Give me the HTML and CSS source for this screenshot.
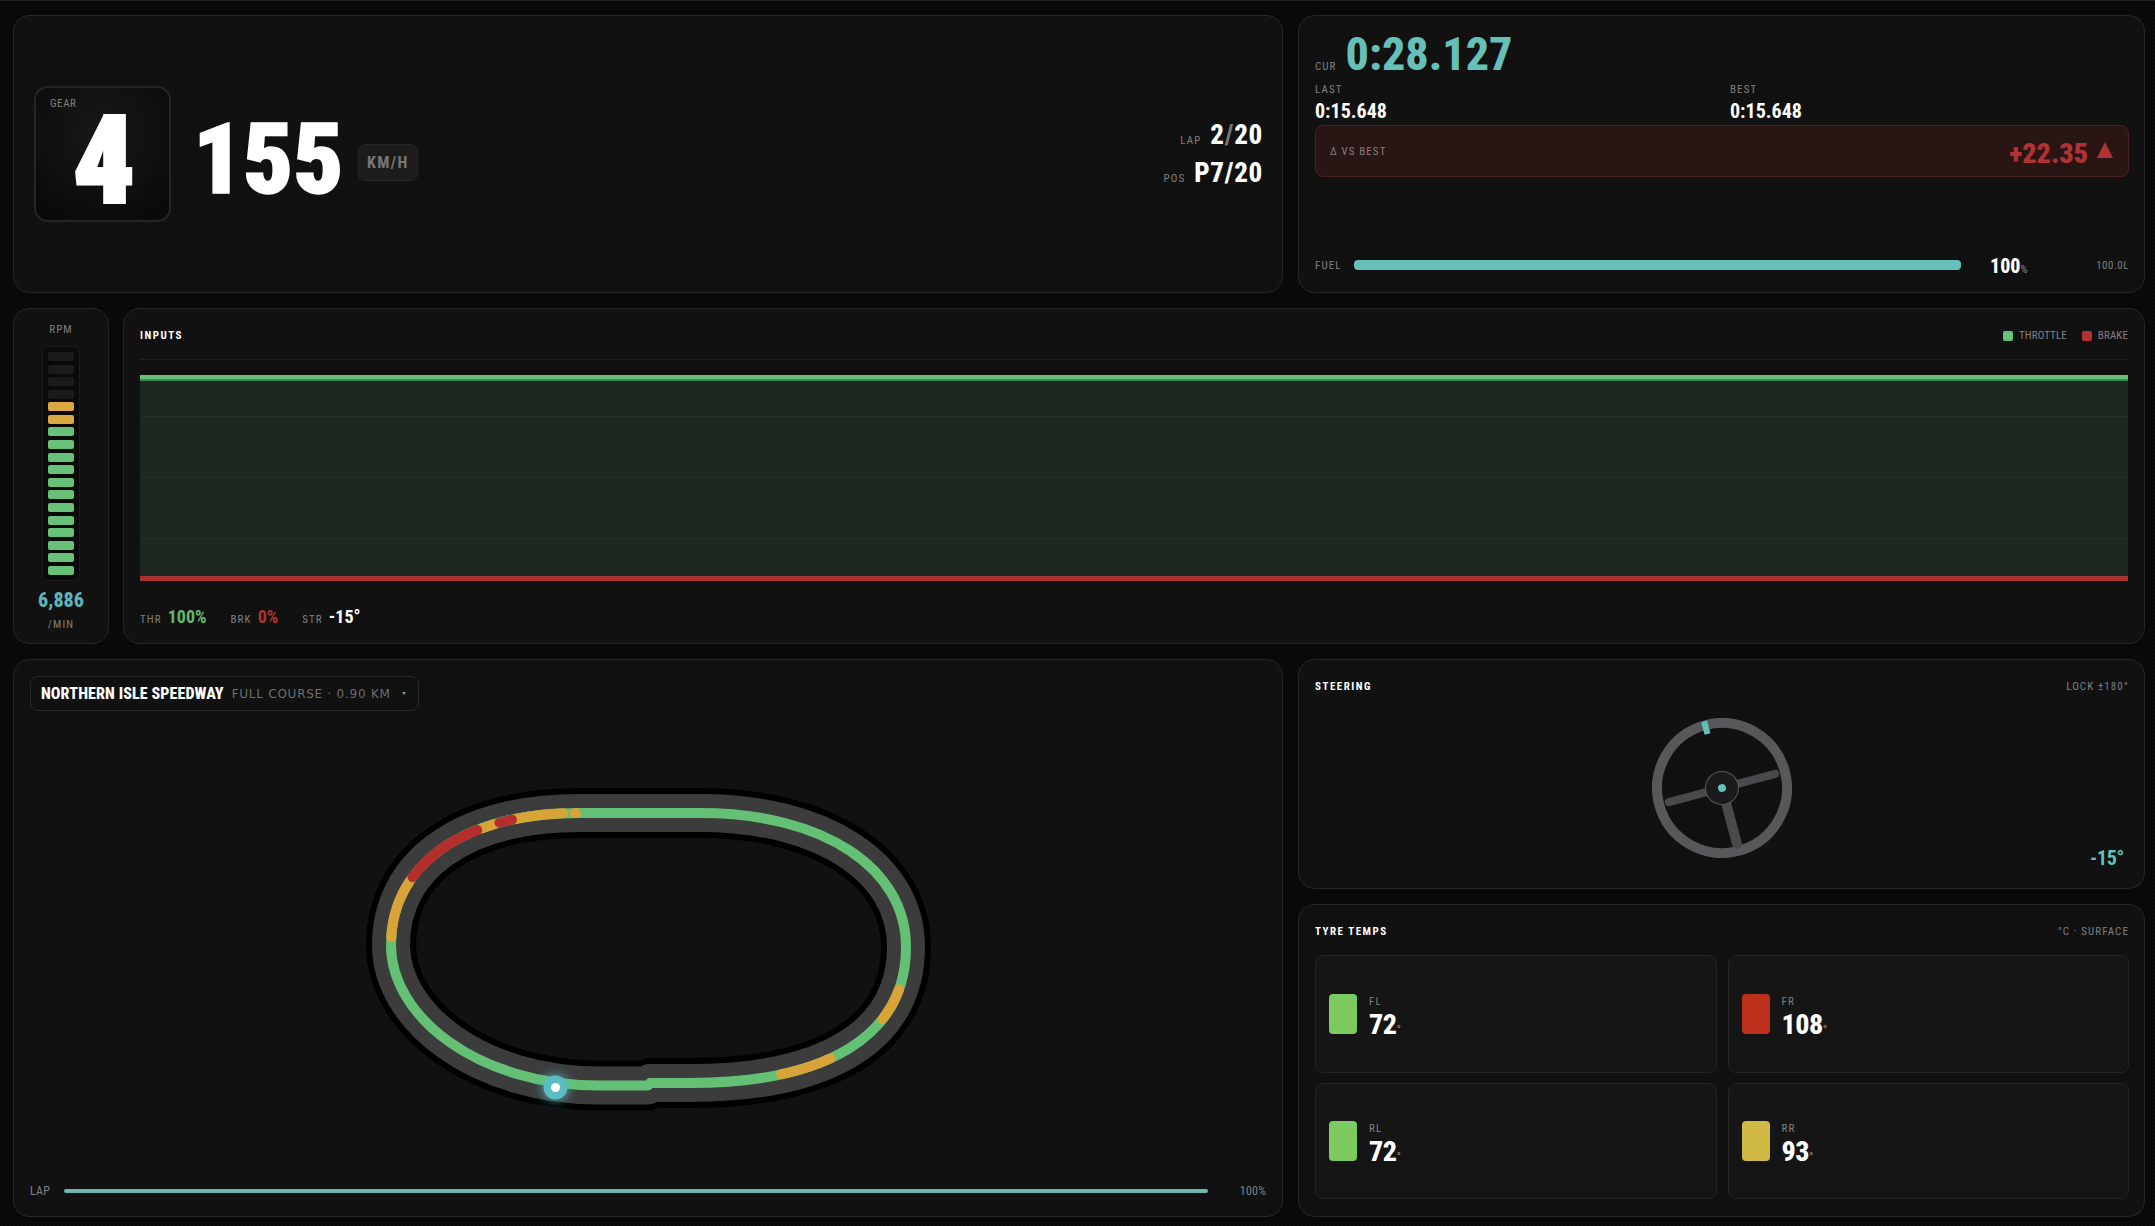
FILE: index.html
```html
<!DOCTYPE html>
<html lang="en">
<head>
  <meta charset="UTF-8">
  <title>Race Telemetry</title>
  <link rel="stylesheet" href="styles.css">
</head>
<body>
  <main class="dash">

    <!-- gear and speed -->
    <section class="panel speed-panel">
      <div class="gear-box">
        <span class="label">GEAR</span>
        <span class="gear-num">4</span>
      </div>
      <div class="speed-num">155</div>
      <div class="speed-unit">KM/H</div>
      <div class="race-info">
        <div class="race-row"><span class="label">LAP</span><span class="race-val">2<i>/</i>20</span></div>
        <div class="race-row"><span class="label">POS</span><span class="race-val">P7/20</span></div>
      </div>
    </section>

    <!-- lap times -->
    <section class="panel time-panel">
      <div class="cur-row">
        <span class="label">CUR</span>
        <span class="cur-time">0:28.127</span>
      </div>
      <div class="split-grid">
        <div><div class="label">LAST</div><div class="split-time">0:15.648</div></div>
        <div><div class="label">BEST</div><div class="split-time">0:15.648</div></div>
      </div>
      <div class="delta-box">
        <span class="label">Δ VS BEST</span>
        <span class="delta-val">+22.35</span>
        <span class="delta-arrow"></span>
      </div>
      <div class="fuel-row">
        <span class="label fuel-label">FUEL</span>
        <div class="fuel-bar"></div>
        <span class="fuel-pct">100<small>%</small></span>
        <span class="label fuel-litres">100.0L</span>
      </div>
    </section>

    <!-- rpm and inputs -->
    <div class="mid-row">
      <section class="panel rpm-panel">
        <div class="label">RPM</div>
        <div class="rpm-meter">
          <div class="seg"></div><div class="seg"></div><div class="seg"></div><div class="seg"></div>
          <div class="seg amber"></div><div class="seg amber"></div>
          <div class="seg green"></div><div class="seg green"></div><div class="seg green"></div><div class="seg green"></div>
          <div class="seg green"></div><div class="seg green"></div><div class="seg green"></div><div class="seg green"></div>
          <div class="seg green"></div><div class="seg green"></div><div class="seg green"></div><div class="seg green"></div>
        </div>
        <div class="rpm-val">6,886</div>
        <div class="label">/MIN</div>
      </section>

      <section class="panel inputs-panel">
        <div class="inputs-head">
          <h2 class="panel-title">INPUTS</h2>
          <div class="legend">
            <i class="key key-green"></i><span class="label">THROTTLE</span>
            <i class="key key-red"></i><span class="label">BRAKE</span>
          </div>
        </div>
        <div class="chart">
          <div class="chart-row"></div>
          <div class="chart-row"></div>
          <div class="chart-row"></div>
          <div class="chart-row"></div>
        </div>
        <div class="input-stats">
          <span class="label">THR</span><span class="stat stat-thr">100%</span>
          <span class="label">BRK</span><span class="stat stat-brk">0%</span>
          <span class="label">STR</span><span class="stat">-15°</span>
        </div>
      </section>
    </div>

    <!-- track map -->
    <section class="panel track-panel">
      <div class="track-select">
        <span class="track-name">NORTHERN ISLE SPEEDWAY</span>
        <span class="track-sub">FULL COURSE · 0.90 KM</span>
        <span class="track-caret"></span>
      </div>
      <svg class="track-map" viewBox="30 711 1237 465" fill="none" stroke-linecap="round" stroke-linejoin="round">
        <defs>
          <path id="circuit" d="M650,1083 L690,1083 C825,1083 906,1037 906,947 C906,869 825,813 700,813 L580,813 C460,813 391,867 391,945 C391,1017 478,1085.5 600,1085.5 L648,1085.5"/>
          <path id="corner-lr" pathLength="100" d="M906,947 C906,1037 825,1083 690,1083"/>
          <path id="corner-tl" pathLength="100" d="M580,813 C460,813 391,867 391,945"/>
        </defs>
        <use href="#circuit" stroke="#000" stroke-width="50"/>
        <use href="#circuit" stroke="#3c3c3c" stroke-width="38"/>
        <g stroke-width="10">
          <use href="#circuit" stroke="#63c074"/>
          <use href="#corner-lr" class="amber-seg" stroke-dasharray="12 1000" stroke-dashoffset="-15"/>
          <use href="#corner-lr" class="amber-seg" stroke-dasharray="18 1000" stroke-dashoffset="-50"/>
          <use href="#corner-tl" class="amber-seg" stroke-dasharray="0.5 1000" stroke-dashoffset="-1.5"/>
          <use href="#corner-tl" class="amber-seg" stroke-dasharray="19 1000" stroke-dashoffset="-6.5"/>
          <use href="#corner-tl" class="amber-seg" stroke-dasharray="5 1000" stroke-dashoffset="-33.5"/>
          <use href="#corner-tl" class="amber-seg" stroke-dasharray="23 1000" stroke-dashoffset="-74"/>
          <use href="#corner-tl" class="red-seg" stroke-dasharray="5 1000" stroke-dashoffset="-26.5"/>
          <use href="#corner-tl" class="red-seg" stroke-dasharray="31.5 1000" stroke-dashoffset="-40.5"/>
        </g>
        <circle class="car-dot" cx="555.5" cy="1087.5" r="12" fill="#5bbcc2"/>
        <circle cx="555.5" cy="1087.5" r="4.5" fill="#fff"/>
      </svg>
      <div class="lap-row">
        <span class="label">LAP</span>
        <div class="lap-bar"></div>
        <span class="label">100%</span>
      </div>
    </section>

    <!-- steering and tyres -->
    <div class="side-col">
      <section class="panel steer-panel">
        <div class="panel-head">
          <h2 class="panel-title">STEERING</h2>
          <span class="label">LOCK ±180°</span>
        </div>
        <svg class="wheel" viewBox="0 0 140 140" fill="none" stroke-linecap="round">
          <g transform="rotate(-15 70 70)">
            <circle cx="70" cy="70" r="65" stroke="#58585b" stroke-width="10"/>
            <line x1="15" y1="70" x2="125" y2="70" stroke="#4a4a4d" stroke-width="8"/>
            <line x1="70" y1="70" x2="70" y2="128" stroke="#4a4a4d" stroke-width="10"/>
            <circle cx="70" cy="70" r="16.5" fill="#1a1a1c" stroke="#58585b" stroke-width="1"/>
            <circle cx="70" cy="70" r="4" fill="#62c0bb"/>
            <line x1="70" y1="1" x2="70" y2="14" stroke="#62c0bb" stroke-width="6" stroke-linecap="butt"/>
          </g>
        </svg>
        <div class="steer-val">-15°</div>
      </section>

      <section class="panel tyre-panel">
        <div class="panel-head">
          <h2 class="panel-title">TYRE TEMPS</h2>
          <span class="label">°C · SURFACE</span>
        </div>
        <div class="tyre-grid">
          <div class="tyre">
            <div class="swatch cool"></div>
            <div class="tyre-text"><div class="label">FL</div><div class="tyre-val">72<small>°</small></div></div>
          </div>
          <div class="tyre">
            <div class="swatch hot"></div>
            <div class="tyre-text"><div class="label">FR</div><div class="tyre-val">108<small>°</small></div></div>
          </div>
          <div class="tyre">
            <div class="swatch cool"></div>
            <div class="tyre-text"><div class="label">RL</div><div class="tyre-val">72<small>°</small></div></div>
          </div>
          <div class="tyre">
            <div class="swatch warm"></div>
            <div class="tyre-text"><div class="label">RR</div><div class="tyre-val">93<small>°</small></div></div>
          </div>
        </div>
      </section>
    </div>

  </main>
</body>
</html>
```

FILE: styles.css
```css
* {
  margin: 0;
  padding: 0;
  box-sizing: border-box;
}

html, body {
  height: 100%;
  overflow: hidden;
}

body {
  background-color: #080808;
  background-image: radial-gradient(#0c0c0c 1px, transparent 1px);
  background-size: 4px 4px;
  color: #fff;
  font-family: Roboto, sans-serif;
  font-stretch: 75%;
}

.dash {
  display: grid;
  grid-template-columns: 1270px 847px;
  grid-template-rows: 278px 336px 558px;
  gap: 15px;
  padding: 14px 10px 0 13px;
  border-top: 1px solid #1c1c1c;
}

.panel {
  background: #111;
  border: 1px solid #262626;
  border-radius: 16px;
}

.label {
  font-size: 11px;
  line-height: 1;
  letter-spacing: 1.1px;
  color: #808080;
}

.panel-title {
  font-size: 11px;
  line-height: 1;
  font-weight: 700;
  letter-spacing: 1.5px;
  color: #fff;
}

.panel-head {
  display: flex;
  justify-content: space-between;
  align-items: flex-start;
}

/* gear + speed */
.speed-panel {
  display: flex;
  align-items: center;
  padding: 0 19px 0 20px;
}

.gear-box {
  width: 137px;
  height: 136px;
  flex: none;
  padding: 10px 14px;
  border: 2px solid #262626;
  border-radius: 14px;
  background: radial-gradient(circle at 50% 35%, #191919, #0a0a0a 85%);
}

.gear-box .label {
  display: block;
  letter-spacing: .6px;
}

.gear-num {
  display: block;
  margin-top: 9px;
  padding-left: 3px;
  text-align: center;
  font-size: 122px;
  line-height: .72;
  font-weight: 900;
  -webkit-text-stroke: 3px #fff;
}

.speed-num {
  margin-left: 22px;
  margin-top: 12px;
  font-size: 98px;
  line-height: 1;
  font-weight: 900;
  letter-spacing: .2px;
  -webkit-text-stroke: 1.5px #fff;
}

.speed-unit {
  display: flex;
  align-items: center;
  justify-content: center;
  width: 60px;
  height: 37px;
  margin-left: 14px;
  margin-top: 17px;
  font-size: 16px;
  font-weight: 700;
  letter-spacing: 1.4px;
  color: #777;
  background: #1c1c1c;
  border: 1px solid #262626;
  border-radius: 7px;
}

.race-info {
  margin-left: auto;
  display: flex;
  flex-direction: column;
  align-items: flex-end;
  gap: 11px;
}

.race-row {
  display: flex;
  align-items: baseline;
  gap: 9px;
}

.race-val {
  font-size: 27px;
  line-height: 1;
  font-weight: 800;
  letter-spacing: .7px;
}

.race-val i {
  font-style: normal;
  color: #777;
}

/* lap times */
.time-panel {
  display: flex;
  flex-direction: column;
  padding: 15px 15px 0 16px;
}

.cur-row {
  display: flex;
  align-items: baseline;
  gap: 9px;
}

.cur-time {
  font-size: 46px;
  line-height: 1;
  font-weight: 800;
  color: #66bfb9;
}

.split-grid {
  display: grid;
  grid-template-columns: 1fr 1fr;
  gap: 16px;
  margin-top: 7px;
}

.split-time {
  margin-top: 6px;
  font-size: 20px;
  line-height: 1;
  font-weight: 700;
}

.delta-box {
  display: flex;
  align-items: center;
  height: 52px;
  margin-top: 4px;
  padding: 0 15px 0 14px;
  background: #2a1515;
  border: 1px solid #4d2020;
  border-radius: 8px;
}

.delta-val {
  margin-left: auto;
  margin-top: 5px;
  font-size: 28px;
  line-height: 1;
  font-weight: 900;
  color: #b03232;
}

.delta-arrow {
  margin-left: 9px;
  margin-top: -3px;
  width: 0;
  height: 0;
  border-left: 8px solid transparent;
  border-right: 8px solid transparent;
  border-bottom: 16px solid #b03232;
}

.fuel-row {
  display: flex;
  align-items: center;
  margin-top: 77px;
}

.fuel-label {
  width: 39px;
}

.fuel-bar {
  width: 607px;
  height: 10px;
  background: #66bfb9;
  border-radius: 4px;
}

.fuel-pct {
  margin-left: 29px;
  margin-top: 2px;
  font-size: 20px;
  line-height: 1;
  font-weight: 800;
}

.fuel-pct small {
  font-size: 11px;
  font-weight: 400;
  color: #888;
}

.fuel-litres {
  margin-left: auto;
  letter-spacing: .5px;
}

/* rpm + inputs row */
.mid-row {
  grid-column: 1 / -1;
  display: flex;
  gap: 14px;
}

.rpm-panel {
  width: 96px;
  flex: none;
  display: flex;
  flex-direction: column;
  align-items: center;
  padding-top: 15px;
}

.rpm-meter {
  width: 38px;
  height: 235px;
  margin-top: 11px;
  padding: 5px;
  display: flex;
  flex-direction: column;
  justify-content: space-between;
  background: #0a0a0a;
  border: 1px solid #1c1c1c;
  border-radius: 7px;
}

.seg {
  height: 9px;
  border-radius: 2px;
  background: #1b1b1b;
}

.seg.amber {
  background: #d9a93f;
}

.seg.green {
  background: #68c178;
}

.rpm-val {
  margin-top: 9px;
  font-size: 20px;
  line-height: 1;
  font-weight: 800;
  color: #5fb3bc;
}

.rpm-val + .label {
  margin-top: 9px;
}

.inputs-panel {
  flex: 1;
  padding: 21px 16px 0;
}

.inputs-head {
  display: flex;
  justify-content: space-between;
  align-items: flex-start;
  height: 30px;
  border-bottom: 1px solid #1f1f1f;
}

.legend {
  display: flex;
  align-items: center;
}

.legend .label {
  letter-spacing: .1px;
}

.key {
  width: 10px;
  height: 10px;
  margin-right: 6px;
  border-radius: 2px;
}

.key-green {
  background: #68c178;
}

.key-red {
  background: #b03232;
  margin-left: 15px;
}

.chart {
  height: 206px;
  margin-top: 15px;
  display: grid;
  grid-template-rows: 38fr 60fr 60fr 37fr;
  background: #1d281f;
  border-top: 4px solid #66c07a;
  border-bottom: 5px solid #a83232;
  box-shadow: inset 0 2px 0 #3d8a50;
}

.chart-row {
  border-bottom: 1px solid #253026;
}

.chart-row:last-child {
  border-bottom: none;
}

.input-stats {
  display: flex;
  align-items: baseline;
  margin-top: 27px;
}

.stat {
  margin-left: 6px;
  margin-right: 24px;
  font-size: 18px;
  line-height: 1;
  font-weight: 700;
}

.stat-thr {
  color: #62b872;
}

.stat-brk {
  color: #b03232;
}

/* track */
.track-panel {
  display: flex;
  flex-direction: column;
  padding: 16px 16px 0;
}

.track-select {
  display: flex;
  align-items: center;
  width: 389px;
  height: 35px;
  padding: 0 10px;
  white-space: nowrap;
  border: 1px solid #2a2a2a;
  border-radius: 8px;
}

.track-name {
  font-size: 16px;
  font-weight: 800;
  letter-spacing: .1px;
}

.track-sub {
  margin-left: 8px;
  font-family: "DejaVu Sans", sans-serif;
  font-stretch: normal;
  font-size: 12px;
  letter-spacing: .75px;
  color: #6e6e6e;
}

.track-caret {
  margin-left: 11px;
  width: 0;
  height: 0;
  border-left: 2px solid transparent;
  border-right: 2px solid transparent;
  border-top: 3px solid #6f9e99;
}

.track-map {
  width: 1237px;
  height: 465px;
  flex: none;
  overflow: visible;
}

.amber-seg {
  stroke: #d9a437;
}

.red-seg {
  stroke: #b52e2e;
}

.car-dot {
  filter: drop-shadow(0 0 6px #5bbcc2);
}

.lap-row {
  display: flex;
  align-items: center;
  margin-top: 9px;
}

.lap-row .label {
  font-size: 12px;
  letter-spacing: .2px;
}

.lap-bar {
  flex: 1;
  height: 4px;
  margin: 0 32px 0 14px;
  background: #6db5b0;
  border-radius: 2px;
}

/* right column */
.side-col {
  display: flex;
  flex-direction: column;
  gap: 15px;
}

.steer-panel {
  height: 230px;
  padding: 21px 15px 0 16px;
  position: relative;
}

.wheel {
  display: block;
  width: 140px;
  height: 140px;
  margin: 26px auto 0;
}

.steer-val {
  position: absolute;
  right: 20px;
  bottom: 20px;
  font-size: 20px;
  line-height: 1;
  font-weight: 700;
  letter-spacing: -.3px;
  color: #62c0bb;
}

.tyre-panel {
  height: 313px;
  padding: 21px 15px 0 16px;
}

.tyre-grid {
  display: grid;
  grid-template-columns: 1fr 1fr;
  grid-template-rows: 118px 116px;
  gap: 10px 11px;
  margin-top: 18px;
}

.tyre {
  display: flex;
  align-items: center;
  gap: 12px;
  padding-left: 13px;
  background: #151515;
  border: 1px solid #242424;
  border-radius: 8px;
}

.swatch {
  width: 28px;
  height: 40px;
  border-radius: 4px;
}

.swatch.cool {
  background: #7cc95f;
}

.swatch.hot {
  background: #bc2f1a;
}

.swatch.warm {
  background: #d0b845;
}

.tyre-text {
  margin-top: 6px;
}

.tyre-val {
  margin-top: 4px;
  font-size: 28px;
  line-height: 1;
  font-weight: 800;
  letter-spacing: -.5px;
}

.tyre-val small {
  font-size: 12px;
  font-weight: 400;
  color: #888;
}
```
